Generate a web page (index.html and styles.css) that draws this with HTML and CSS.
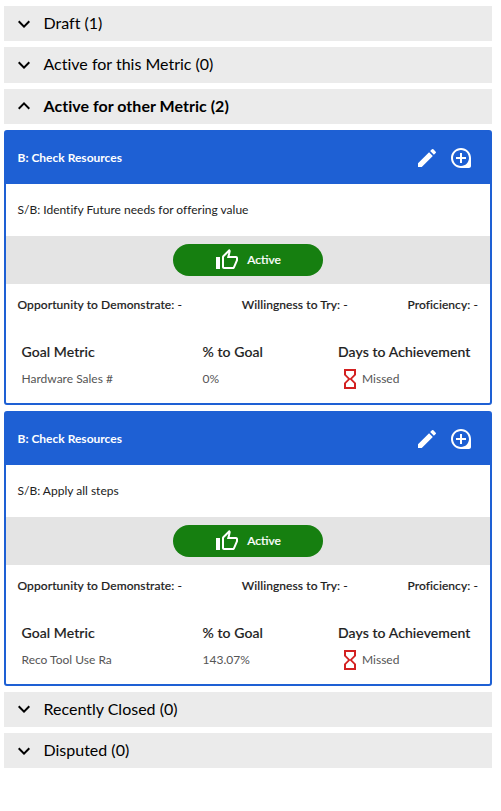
FILE: index.html
```html
<!DOCTYPE html>
<html lang="en">
<head>
    <meta charset="UTF-8">
    <meta name="viewport" content="width=device-width, initial-scale=1.0">
    <title>Behaviors</title>
    <link rel="stylesheet" href="styles.css">
</head>
<body>
    <svg class="sprite">
        <symbol id="expand" viewBox="0 0 24 24"><path d="M7.41 8.59 12 13.17l4.59-4.58L18 10l-6 6-6-6z"/></symbol>
        <symbol id="collapse" viewBox="0 0 24 24"><path d="M12 8l-6 6 1.41 1.41L12 10.83l4.59 4.58L18 14z"/></symbol>
        <symbol id="edit" viewBox="0 0 24 24"><path d="M3 17.25V21h3.75L17.81 9.94l-3.75-3.75L3 17.25zM20.71 7.04a1 1 0 0 0 0-1.41l-2.34-2.34a1 1 0 0 0-1.41 0l-1.83 1.83 3.75 3.75 1.83-1.83z"/></symbol>
        <symbol id="add" viewBox="0 0 24 24"><path d="M13 7h-2v4H7v2h4v4h2v-4h4v-2h-4V7zm-1-5C6.49 2 2 6.49 2 12s4.49 10 10 10h8c1.1 0 2-.9 2-2v-8c0-5.51-4.49-10-10-10zm0 18c-4.41 0-8-3.59-8-8s3.59-8 8-8 8 3.59 8 8-3.59 8-8 8z"/></symbol>
        <symbol id="thumb" viewBox="0 0 24 24"><path d="M9 21h9c.83 0 1.54-.5 1.84-1.22l3.02-7.05c.09-.23.14-.47.14-.73v-2c0-1.1-.9-2-2-2h-6.31l.95-4.57.03-.32c0-.41-.17-.79-.44-1.06L14.17 1 7.58 7.59C7.22 7.95 7 8.45 7 9v10c0 1.1.9 2 2 2zM9 9l4.34-4.34L12 10h9v2l-3 7H9V9zM1 9h4v12H1z"/></symbol>
        <symbol id="hourglass" viewBox="0 0 24 24"><path d="M6 2v6h.01L6 8.01 10 12l-4 4 .01.01H6V22h12v-5.99h-.01L18 16l-4-4 4-3.99-.01-.01H18V2H6zm10 14.5V20H8v-3.5l4-4 4 4zm-4-5-4-4V4h8v3.5l-4 4z"/></symbol>
    </svg>

    <main>
        <div class="bar">
            <svg class="arrow"><use href="#expand"/></svg>
            <span>Draft (1)</span>
        </div>
        <div class="bar">
            <svg class="arrow"><use href="#expand"/></svg>
            <span>Active for this Metric (0)</span>
        </div>
        <div class="bar open">
            <svg class="arrow"><use href="#collapse"/></svg>
            <span>Active for other Metric (2)</span>
        </div>

        <div class="card">
            <div class="card-header">
                <h3>B: Check Resources</h3>
                <svg class="icon"><use href="#edit"/></svg>
                <svg class="icon"><use href="#add"/></svg>
            </div>
            <p class="desc">S/B: Identify Future needs for offering value</p>
            <div class="status">
                <button class="active-btn"><svg class="icon"><use href="#thumb"/></svg><span>Active</span></button>
            </div>
            <div class="ratings">
                <span>Opportunity to Demonstrate: -</span>
                <span>Willingness to Try: -</span>
                <span>Proficiency: -</span>
            </div>
            <div class="goals">
                <h4>Goal Metric</h4>
                <h4>% to Goal</h4>
                <h4>Days to Achievement</h4>
                <span>Hardware Sales #</span>
                <span>0%</span>
                <span class="missed"><svg class="icon"><use href="#hourglass"/></svg>Missed</span>
            </div>
        </div>

        <div class="card">
            <div class="card-header">
                <h3>B: Check Resources</h3>
                <svg class="icon"><use href="#edit"/></svg>
                <svg class="icon"><use href="#add"/></svg>
            </div>
            <p class="desc">S/B: Apply all steps</p>
            <div class="status">
                <button class="active-btn"><svg class="icon"><use href="#thumb"/></svg><span>Active</span></button>
            </div>
            <div class="ratings">
                <span>Opportunity to Demonstrate: -</span>
                <span>Willingness to Try: -</span>
                <span>Proficiency: -</span>
            </div>
            <div class="goals">
                <h4>Goal Metric</h4>
                <h4>% to Goal</h4>
                <h4>Days to Achievement</h4>
                <span>Reco Tool Use Ra</span>
                <span>143.07%</span>
                <span class="missed"><svg class="icon"><use href="#hourglass"/></svg>Missed</span>
            </div>
        </div>

        <div class="bar">
            <svg class="arrow"><use href="#expand"/></svg>
            <span>Recently Closed (0)</span>
        </div>
        <div class="bar">
            <svg class="arrow"><use href="#expand"/></svg>
            <span>Disputed (0)</span>
        </div>
    </main>
</body>
</html>
```
FILE: styles.css
```css
:root {
--blue: #1e60d4;
--green: #167f10;
--red: #d32020;
--gray: #ebebeb;
}

*,
*::before,
*::after {
box-sizing: border-box;
}

body {
font-family: Lato, sans-serif;
font-variant-ligatures: none;
background-color: #ffffff;
color: #212121;
margin: 0;
}

h3, h4, p {
margin: 0;
}

.sprite {
display: none;
}

main {
display: flex;
flex-direction: column;
gap: 6px;
width: 488px;
margin: 6px 0 0 4px;
}

.bar {
display: flex;
align-items: center;
height: 35.28px;
padding-left: 8px;
background-color: var(--gray);
color: #000;
font-size: 16px;
}

.bar span {
padding-bottom: 2px;
}

.bar.open {
font-weight: 700;
letter-spacing: 0.03px;
}

.arrow {
width: 24px;
height: 24px;
margin-right: 7.5px;
}

.icon {
width: 24px;
height: 24px;
fill: currentColor;
}

.card {
height: 275px;
border: 2px solid var(--blue);
border-radius: 3px;
font-size: 12px;
}

.card-header {
display: flex;
align-items: center;
gap: 10px;
height: 52px;
padding: 0 17px 0 11.5px;
background-color: var(--blue);
color: #fff;
}

.card-header h3 {
flex: 1;
font-size: 12px;
font-weight: 700;
}

.desc {
height: 52px;
padding-left: 11.5px;
line-height: 52px;
}

.status {
display: flex;
justify-content: center;
align-items: center;
height: 48px;
background-color: #e4e4e4;
}

.active-btn {
display: flex;
justify-content: center;
align-items: center;
gap: 8px;
width: 150px;
height: 32px;
padding: 0;
border: none;
border-radius: 16px;
background-color: var(--green);
color: #fff;
font-family: inherit;
font-size: 12px;
font-weight: 500;
-webkit-text-stroke: 0.2px;
}

.ratings {
display: flex;
justify-content: space-between;
padding: 0 12px 0 11.5px;
line-height: 42px;
font-weight: 500;
letter-spacing: 0.08px;
-webkit-text-stroke: 0.15px;
}

.goals {
display: grid;
grid-template-columns: 181px 135.5px 1fr;
grid-template-rows: 27px 28px;
align-items: center;
padding: 12px 0 0 15.5px;
color: #555;
}

.goals h4 {
font-size: 14px;
font-weight: 500;
letter-spacing: 0.08px;
color: #212121;
-webkit-text-stroke: 0.15px;
}

.missed {
display: flex;
align-items: center;
}

.missed .icon {
fill: var(--red);
}
```
